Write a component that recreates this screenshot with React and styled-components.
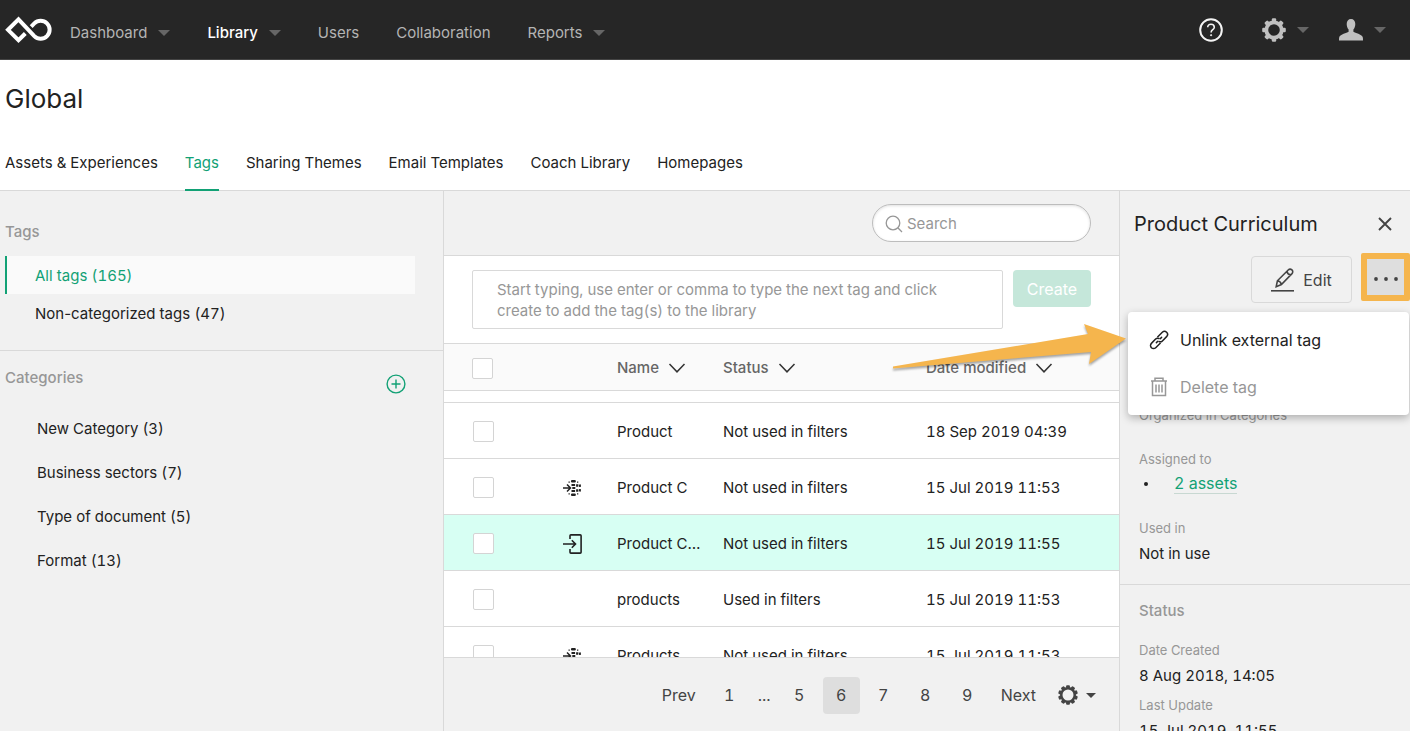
import React from "react"
import styled, { createGlobalStyle, css } from 'styled-components';

const dark = "#262626";
const text = "#222222";
const grey = "#979797";
const line = "#d9d9d9";
const panel = "#f1f1f1";
const green = "#12a175";
const orange = "#f5b54d";

const GlobalStyle = createGlobalStyle`
  * {
    box-sizing: border-box;
  }

  body {
    margin: 0;
    font-family: Inter, "Liberation Sans", sans-serif;
    font-size: 15px;
    line-height: 24px;
    font-variant-numeric: tabular-nums;
    color: ${text};
    background: #fff;
  }

  button, input, textarea {
    font: inherit;
    color: inherit;
  }

  button {
    padding: 0;
    border: 0;
    background: none;
    cursor: pointer;
  }

  ul {
    margin: 0;
    padding: 0;
    list-style: none;
  }

  svg {
    display: block;
    flex: none;
  }
`;

const Page = styled.div`
  display: flex;
  flex-direction: column;
  height: 100vh;
  overflow: hidden;
`;

/* top bar */

const TopBar = styled.header`
  display: flex;
  align-items: center;
  flex: none;
  height: 60px;
  padding: 1px 24px 0 5px;
  background: ${dark};
  border-bottom: 1px solid #444;
`;

const Nav = styled.nav`
  display: flex;
  gap: 37px;
  flex: 1;
  margin-left: 18px;
  padding-top: 6px;
`;

const NavLink = styled.a`
  display: flex;
  align-items: center;
  gap: 11px;
  color: ${props => props.$active ? '#fff' : '#b4b4b4'};
  font-weight: ${props => props.$active ? 500 : 400};
  text-decoration: none;
`;

const Caret = styled.span`
  border: ${props => props.$size || 6}px solid transparent;
  border-top-color: ${props => props.$color || '#666'};
  border-bottom: 0;
`;

const Tools = styled.div`
  display: flex;
  align-items: center;
  gap: 30px;
`;

const ToolButton = styled.button`
  display: flex;
  align-items: center;
  gap: 11px;
  color: ${props => props.$bright ? '#f4f4f4' : '#c0c0c0'};

  &:first-child {
    margin-right: 9px;
  }
`;

/* page heading */

const Heading = styled.h1`
  flex: none;
  margin: 0;
  padding: 21px 5px 0;
  font-size: 26px;
  line-height: 36px;
  font-weight: 400;
`;

const Tabs = styled.nav`
  display: flex;
  flex: none;
  gap: 27px;
  margin-top: 34px;
  padding: 0 5px;
  border-bottom: 1px solid ${line};
`;

const Tab = styled.a`
  padding-bottom: 14px;
  margin-bottom: -1px;
  border-bottom: 2px solid ${props => props.$active ? green : 'transparent'};
  color: ${props => props.$active ? green : text};
  text-decoration: none;
`;

const Body = styled.div`
  display: grid;
  grid-template-columns: 444px 1fr 291px;
  grid-template-rows: minmax(0, 1fr);
  flex: 1;
  min-height: 0;
`;

/* left column */

const Sidebar = styled.aside`
  background: ${panel};
  border-right: 1px solid ${line};
`;

const SideGroup = styled.section`
  padding: ${props => props.$top}px 28px 18px 5px;

  & + & {
    border-top: 1px solid ${line};
  }
`;

const SideHead = styled.div`
  display: flex;
  justify-content: space-between;
  padding-right: 9px;
`;

const SideTitle = styled.h2`
  margin: 0;
  font-size: 15px;
  line-height: 24px;
  font-weight: 500;
  color: ${grey};
`;

const AddButton = styled.button`
  display: flex;
  margin-top: 8px;
  color: ${green};
`;

const FilterList = styled.ul`
  margin-top: 12px;
`;

const FilterLink = styled.a`
  display: block;
  height: 38px;
  padding: 8px 28px;
  border-left: 2px solid transparent;
  color: ${text};
  font-variant-numeric: normal;
  text-decoration: none;

  ${props => props.$active && css`
    border-color: ${green};
    background: #fafafa;
    color: ${green};
  `}
`;

const Count = styled.span`
  font-variant-numeric: tabular-nums;
`;

const CategoryList = styled.ul`
  display: flex;
  flex-direction: column;
  gap: 20px;
  margin-top: 23px;
  padding-left: 32px;
`;

const CategoryLink = styled.a`
  color: ${text};
  text-decoration: none;
`;

/* middle column */

const Main = styled.main`
  display: flex;
  flex-direction: column;
  min-width: 0;
  min-height: 0;
`;

const SearchBar = styled.div`
  display: flex;
  justify-content: flex-end;
  flex: none;
  padding: 13px 28px;
  background: ${panel};
  border-bottom: 1px solid ${line};
`;

const SearchBox = styled.label`
  display: flex;
  align-items: center;
  gap: 4px;
  width: 219px;
  height: 38px;
  padding: 1px 12px 0;
  border: 1px solid #bdbdbd;
  border-radius: 19px;
  background: #fff;
  box-shadow: inset 0 1px 3px rgba(0, 0, 0, 0.12);
  color: ${grey};
`;

const SearchInput = styled.input`
  flex: 1;
  min-width: 0;
  padding: 0;
  border: 0;
  outline: 0;
  background: none;

  &::placeholder {
    color: ${grey};
  }
`;

const CreateRow = styled.form`
  display: flex;
  align-items: flex-start;
  gap: 10px;
  flex: none;
  padding: 14px 28px;
`;

const TagInput = styled.textarea`
  flex: 1;
  height: 59px;
  padding: 8px 24px;
  border: 1px solid ${line};
  border-radius: 2px;
  outline: 0;
  resize: none;
  overflow: hidden;
  line-height: 21px;

  &::placeholder {
    color: ${grey};
  }
`;

const CreateButton = styled.button`
  width: 78px;
  height: 37px;
  border-radius: 4px;
  background: #c5e7da;
  color: #fff;
  font-size: 16px;
`;

const TableArea = styled.div`
  flex: 1;
  min-height: 0;
  overflow: hidden;
`;

const Table = styled.table`
  width: 100%;
  table-layout: fixed;
  border-collapse: separate;
  border-spacing: 0;
`;

const Col = styled.col`
  width: ${props => props.$width}px;
`;

const Th = styled.th`
  height: 48px;
  padding: 2px 0 0;
  border: solid ${line};
  border-width: 1px 0;
  background: #fafafa;
  text-align: left;
  font-weight: 400;

  &:first-child {
    padding-left: 28px;
  }
`;

const SortButton = styled.button`
  display: flex;
  align-items: center;
  gap: 9px;
  color: #666;
  font-weight: 500;
  white-space: nowrap;
`;

const Spacer = styled.td`
  height: 12px;
  padding: 0;
  border-bottom: 1px solid ${line};
`;

const Row = styled.tr`
  background: ${props => props.$selected ? '#d7fff3' : '#fff'};
`;

const Td = styled.td`
  height: 56px;
  padding: 2px 22px 0 0;
  border-bottom: 1px solid ${line};
  overflow: hidden;
  text-overflow: ellipsis;
  white-space: nowrap;

  &:first-child {
    padding-left: 29px;
  }
`;

const Check = styled.input`
  display: block;
  appearance: none;
  width: 21px;
  height: 21px;
  margin: 0;
  border: 1px solid #d4d4d4;
  border-radius: 2px;
  background: #fff;
`;

const Pager = styled.nav`
  display: flex;
  align-items: center;
  justify-content: flex-end;
  gap: 5px;
  flex: none;
  height: 74px;
  padding: 1px 23px 0 0;
  border-top: 1px solid ${line};
  background: ${panel};
  color: #444;
  font-size: 16px;
`;

const PageButton = styled.button`
  min-width: 37px;
  height: 37px;
  padding: 0 10px;
  border-radius: 4px;
  background: ${props => props.$active ? '#dedede' : 'none'};
`;

const Dots = styled.span`
  width: 23px;
  text-align: center;
`;

const PagerSettings = styled.button`
  display: flex;
  align-items: center;
  gap: 8px;
  margin-left: 7px;
`;

/* right column */

const Details = styled.aside`
  min-width: 0;
  border-left: 1px solid ${line};
  background: ${panel};
`;

const DetailsHead = styled.div`
  display: flex;
  align-items: center;
  justify-content: space-between;
  padding: 18px 17px 0 14px;
`;

const DetailsTitle = styled.h2`
  margin: 0;
  font-size: 20px;
  line-height: 30px;
  font-weight: 400;
`;

const CloseButton = styled.button`
  display: flex;
  color: #444;
`;

const Actions = styled.div`
  position: relative;
  display: flex;
  justify-content: flex-end;
  align-items: flex-start;
  gap: 9px;
  margin-top: 14px;
`;

const EditButton = styled.button`
  display: flex;
  align-items: center;
  justify-content: center;
  gap: 9px;
  width: 101px;
  height: 47px;
  margin-top: 3px;
  border: 1px solid ${line};
  border-radius: 4px;
  color: #444;
  font-size: 16px;
`;

const MoreButton = styled.button`
  display: flex;
  align-items: center;
  justify-content: center;
  width: 49px;
  height: 48px;
  padding-top: 4px;
  border: 6px solid ${orange};
  border-radius: 2px;
  background: #dedede;
  color: #444;
`;

const Menu = styled.div`
  position: absolute;
  top: 59px;
  right: 1px;
  width: 281px;
  padding: 4px 0 5px;
  border-radius: 4px;
  background: #fff;
  box-shadow: 0 3px 8px rgba(0, 0, 0, 0.28);
`;

const MenuItem = styled.button`
  display: flex;
  align-items: center;
  gap: 11px;
  width: 100%;
  height: 47px;
  padding-left: 21px;
  font-size: 16px;

  &:disabled {
    color: ${grey};
  }
`;

const Pointer = styled.svg`
  position: absolute;
  top: 5px;
  right: 100%;
  pointer-events: none;
  filter: drop-shadow(0 2px 1px rgba(0, 0, 0, 0.35));
`;

const DetailsGroup = styled.dl`
  margin: 0;
  padding: ${props => props.$top}px 19px 18px;
`;

const GroupTitle = styled.h3`
  margin: 0;
  padding: 14px 19px 0;
  border-top: 1px solid ${line};
  font-size: 15px;
  line-height: 24px;
  font-weight: 500;
  color: ${grey};
`;

const Label = styled.dt`
  font-size: 13px;
  line-height: 20px;
  color: ${grey};
`;

const Value = styled.dd`
  margin: 4px 0 ${props => props.$after || 0}px;
`;

const Empty = styled.dd`
  height: 24px;
  margin: 0;
`;

const AssetItem = styled.li`
  display: flex;
  align-items: center;
  gap: 26px;
  padding-left: 5px;

  &::before {
    content: '';
    width: 4px;
    height: 4px;
    border-radius: 50%;
    background: ${text};
  }
`;

const AssetLink = styled.a`
  line-height: 20px;
  border-bottom: 1px solid #c8d8d2;
  color: ${green};
  font-size: 16px;
  text-decoration: none;
`;

/* icons */

const Logo = () => (
  <svg width="47" height="30" viewBox="0 0 47 30" fill="none" stroke="#fff" strokeWidth="4">
    <path d="M20.300 18.500 13.500 25.200 3 14.800 13.500 4.300 29.300 21.200A9 9 0 1 0 29.300 8.400L26.200 11.600" />
  </svg>
)

const HelpIcon = () => (
  <svg width="24" height="24" viewBox="0 0 24 24" fill="none" stroke="currentColor">
    <circle cx="12" cy="12" r="10.800" strokeWidth="2" />
    <path d="M8.700 9.300c0-2 1.400-3.100 3.300-3.100s3.300 1.200 3.300 3c0 2.500-3.200 2.500-3.200 5.200" strokeWidth="1.600" />
    <circle cx="12.100" cy="17.200" r=".6" fill="currentColor" />
  </svg>
)

const Gear = ({ size, teeth, inner, tooth }) => (
  <svg width={size} height={size} viewBox="0 0 24 24" fill="none" stroke="currentColor">
    <circle cx="12" cy="12" r={(9.6 + inner) / 2} strokeWidth={9.6 - inner} />
    {Array.from({ length: teeth }, (_, i) => (
      <rect
        key={i}
        x={12 - tooth / 2}
        y="0.2"
        width={tooth}
        height="4"
        rx="1.2"
        fill="currentColor"
        stroke="none"
        transform={`rotate(${i * 360 / teeth} 12 12)`}
      />
    ))}
  </svg>
)

const UserIcon = () => (
  <svg width="24" height="24" viewBox="0 0 24 24" fill="currentColor">
    <path d="M12 1c2.700 0 4.300 2 4.300 5 0 2.200-.7 4.300-1.900 5.500v2.200c2 1.300 8.100 2.300 9.300 5.300.3.900.3 2.200.3 3.600H0c0-1.400 0-2.700.3-3.600 1.200-3 7.300-4 9.300-5.300v-2.200C8.400 10.300 7.700 8.200 7.700 6c0-3 1.600-5 4.300-5z" />
  </svg>
)

const PlusIcon = () => (
  <svg width="20" height="20" viewBox="0 0 20 20" fill="none" stroke="currentColor" strokeWidth="1.400">
    <circle cx="10" cy="10" r="8.900" />
    <path d="M10 5.500v9M5.500 10h9" />
  </svg>
)

const SearchIcon = () => (
  <svg width="18" height="18" viewBox="0 0 18 18" fill="none" stroke="currentColor" strokeWidth="1.300">
    <circle cx="8" cy="8" r="6.800" />
    <path d="m12.800 12.800 4.200 4.200" />
  </svg>
)

const ChevronIcon = () => (
  <svg width="18" height="10" viewBox="0 0 18 10" fill="none" stroke="#333" strokeWidth="1.500">
    <path d="m1.500 1 7.500 7.800L16.500 1" />
  </svg>
)

const WebIcon = () => (
  <svg width="18" height="18" viewBox="0 0 18 18" fill="none" stroke={text} strokeWidth="1.500">
    <path d="M0 9h7M4 5.500 7.500 9 4 12.500" />
    <path d="M9.200 2.200h2.400M9.200 15.800h2.400" strokeWidth="2.600" strokeLinecap="round" />
    <path d="M8.500 6h3.600M9.300 9h3M8.500 12h3.600" strokeWidth="2.200" />
    <path d="M14.200 5.200v2.600M14.200 10.200v2.600" strokeWidth="2.200" />
    <path d="M16.700 5.500l.4 2.300M17.100 10.200l-.4 2.300" strokeWidth="2" />
    <path d="M5.500 3.200h1.300M14 3.200h1.300M5.500 14.800h1.300M14 14.800h1.300" strokeWidth="1.300" />
  </svg>
)

const ImportIcon = () => (
  <svg width="19" height="20" viewBox="0 0 19 20" fill="none" stroke={text} strokeWidth="1.600">
    <path d="M7 5V1.800c0-.6.300-.9.900-.9h9.300c.6 0 .9.300.9.900v16.400c0 .6-.3.900-.9.900H7.900c-.6 0-.9-.3-.9-.9V15" />
    <path d="M0 10h12.300M8.800 6.300l3.700 3.700-3.700 3.700" />
  </svg>
)

const CloseIcon = () => (
  <svg width="16" height="16" viewBox="0 0 16 16" fill="none" stroke="currentColor" strokeWidth="1.900">
    <path d="m2 2 12 12M14 2 2 14" />
  </svg>
)

const PencilIcon = () => (
  <svg width="23" height="24" viewBox="0 0 23 24" fill="none" stroke="currentColor" strokeWidth="1.600">
    <path d="M0 22.800h23" />
    <path d="m5.200 18.700 1.200-5.900L17.200 2c1-1 2.600-1.100 3.700-.1s1.100 2.600.1 3.700L10.400 16.600zM16 3.300c.3 2 1.700 3.300 3.700 3.600M6.400 12.800c2.200.4 3.600 1.700 4 3.800" />
  </svg>
)

const DotsIcon = () => (
  <svg width="26" height="6" viewBox="0 0 26 6" fill="currentColor">
    <circle cx="3" cy="3" r="1.900" />
    <circle cx="13" cy="3" r="1.900" />
    <circle cx="23" cy="3" r="1.900" />
  </svg>
)

const LinkIcon = () => (
  <svg width="20" height="20" viewBox="0 0 20 20" fill="none" stroke={text} strokeWidth="1.500" strokeLinecap="round">
    <path d="m8.800 6.800 4.500-4.500a3 3 0 0 1 4.300 4.300l-4.200 4.300a3 3 0 0 1-3.400.6" />
    <path d="m11.200 13.200-4.500 4.500a3 3 0 0 1-4.300-4.300l4.200-4.300a3 3 0 0 1 3.400-.6" />
    <path d="m12.600 7.400-1.400 1.400M8.800 11.200l-1.400 1.400" />
  </svg>
)

const TrashIcon = () => (
  <svg width="20" height="20" viewBox="0 0 20 20" fill="none" stroke="currentColor" strokeWidth="1.500">
    <path d="M2 4h16M6 4V1.300h8V4M3.500 4v14.500h13V4M7 7.500v8M10 7.500v8M13 7.500v8" />
  </svg>
)

const navItems = [
  { name: 'Dashboard', menu: true },
  { name: 'Library', menu: true, active: true },
  { name: 'Users' },
  { name: 'Collaboration' },
  { name: 'Reports', menu: true },
];

const tabs = ['Assets & Experiences', 'Tags', 'Sharing Themes', 'Email Templates', 'Coach Library', 'Homepages'];

const categories = ['New Category (3)', 'Business sectors (7)', 'Type of document (5)', 'Format (13)'];

const rows = [
  { name: 'Product', status: 'Not used in filters', date: '18 Sep 2019 04:39' },
  { name: 'Product C', status: 'Not used in filters', date: '15 Jul 2019 11:53', icon: <WebIcon /> },
  { name: 'Product Curriculum', status: 'Not used in filters', date: '15 Jul 2019 11:55', icon: <ImportIcon />, selected: true },
  { name: 'products', status: 'Used in filters', date: '15 Jul 2019 11:53' },
  { name: 'Products', status: 'Not used in filters', date: '15 Jul 2019 11:53', icon: <WebIcon /> },
];

const Header = () => (
  <TopBar>
    <Logo />
    <Nav>
      {navItems.map(item => (
        <NavLink key={item.name} href="#" $active={item.active}>
          {item.name}
          {item.menu && <Caret />}
        </NavLink>
      ))}
    </Nav>
    <Tools>
      <ToolButton $bright aria-label="Help"><HelpIcon /></ToolButton>
      <ToolButton aria-label="Settings"><Gear size={24} teeth={8} inner={5.8} tooth={4.4} /><Caret /></ToolButton>
      <ToolButton aria-label="Account"><UserIcon /><Caret /></ToolButton>
    </Tools>
  </TopBar>
)

const Filters = () => (
  <Sidebar>
    <SideGroup $top={29}>
      <SideTitle>Tags</SideTitle>
      <FilterList>
        <li><FilterLink href="#" $active>All tags <Count>(165)</Count></FilterLink></li>
        <li><FilterLink href="#">Non-categorized tags <Count>(47)</Count></FilterLink></li>
      </FilterList>
    </SideGroup>
    <SideGroup $top={15}>
      <SideHead>
        <SideTitle>Categories</SideTitle>
        <AddButton aria-label="Add category"><PlusIcon /></AddButton>
      </SideHead>
      <CategoryList>
        {categories.map(name => (
          <li key={name}><CategoryLink href="#">{name}</CategoryLink></li>
        ))}
      </CategoryList>
    </SideGroup>
  </Sidebar>
)

const TagTable = () => (
  <TableArea>
    <Table>
      <colgroup>
        <Col $width={119} />
        <Col $width={54} />
        <Col $width={106} />
        <Col $width={203} />
        <col />
      </colgroup>
      <thead>
        <tr>
          <Th><Check type="checkbox" aria-label="Select all" /></Th>
          <Th />
          {['Name', 'Status', 'Date modified'].map(name => (
            <Th key={name}><SortButton>{name}<ChevronIcon /></SortButton></Th>
          ))}
        </tr>
      </thead>
      <tbody>
        <tr><Spacer colSpan={5} /></tr>
        {rows.map(row => (
          <Row key={row.name} $selected={row.selected}>
            <Td><Check type="checkbox" aria-label={row.name} /></Td>
            <Td>{row.icon}</Td>
            <Td>{row.name}</Td>
            <Td>{row.status}</Td>
            <Td>{row.date}</Td>
          </Row>
        ))}
      </tbody>
    </Table>
  </TableArea>
)

const Pagination = () => (
  <Pager>
    <PageButton>Prev</PageButton>
    <PageButton>1</PageButton>
    <Dots>...</Dots>
    {[5, 6, 7, 8, 9].map(n => (
      <PageButton key={n} $active={n === 6}>{n}</PageButton>
    ))}
    <PageButton>Next</PageButton>
    <PagerSettings aria-label="Page settings">
      <Gear size={20} teeth={10} inner={6.6} tooth={4.6} />
      <Caret $size={5} $color="#444" />
    </PagerSettings>
  </Pager>
)

const TagDetails = () => (
  <Details>
    <DetailsHead>
      <DetailsTitle>Product Curriculum</DetailsTitle>
      <CloseButton aria-label="Close"><CloseIcon /></CloseButton>
    </DetailsHead>
    <Actions>
      <EditButton><PencilIcon />Edit</EditButton>
      <MoreButton aria-label="More"><DotsIcon /></MoreButton>
      <Menu>
        <Pointer width="236" height="54" viewBox="0 0 236 54">
          <path d="M1 49.500 196 17 192 7l42 14.500L197 47l2-12L1 51.500z" fill={orange} />
        </Pointer>
        <MenuItem><LinkIcon />Unlink external tag</MenuItem>
        <MenuItem disabled><TrashIcon />Delete tag</MenuItem>
      </Menu>
    </Actions>
    <DetailsGroup $top={102}>
      <Label>Organized in Categories</Label>
      <Empty />
      <Label>Assigned to</Label>
      <Value $after={24}>
        <ul><AssetItem><AssetLink href="#">2 assets</AssetLink></AssetItem></ul>
      </Value>
      <Label>Used in</Label>
      <Value>Not in use</Value>
    </DetailsGroup>
    <GroupTitle>Status</GroupTitle>
    <DetailsGroup $top={17}>
      <Label>Date Created</Label>
      <Value $after={7}>8 Aug 2018, 14:05</Value>
      <Label>Last Update</Label>
      <Value>15 Jul 2019, 11:55</Value>
    </DetailsGroup>
  </Details>
)

const App = () => (
  <Page>
    <GlobalStyle />
    <Header />
    <Heading>Global</Heading>
    <Tabs>
      {tabs.map(name => (
        <Tab key={name} href="#" $active={name === 'Tags'}>{name}</Tab>
      ))}
    </Tabs>
    <Body>
      <Filters />
      <Main>
        <SearchBar>
          <SearchBox>
            <SearchIcon />
            <SearchInput type="search" placeholder="Search" aria-label="Search" />
          </SearchBox>
        </SearchBar>
        <CreateRow>
          <TagInput
            aria-label="New tags"
            placeholder="Start typing, use enter or comma to type the next tag and click create to add the tag(s) to the library"
          />
          <CreateButton type="button">Create</CreateButton>
        </CreateRow>
        <TagTable />
        <Pagination />
      </Main>
      <TagDetails />
    </Body>
  </Page>
)

export default App;
